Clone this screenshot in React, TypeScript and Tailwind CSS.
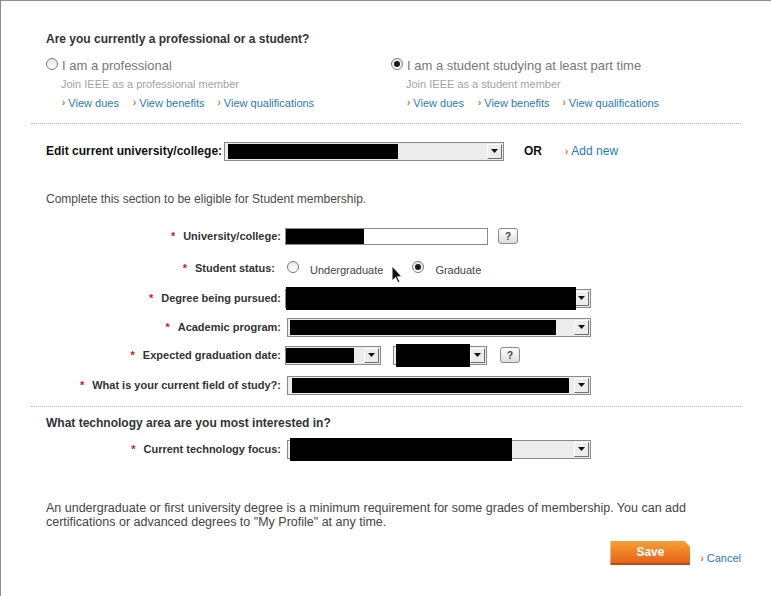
import type { ReactNode } from "react";

function Radio({ checked }: { checked?: boolean }) {
  return (
    <span className="flex w-[12px] h-[12px] rounded-full border border-[#7a7a7a] bg-gradient-to-b from-[#e8e8e8] to-white items-center justify-center shrink-0">
      {checked && <span className="w-[6px] h-[6px] rounded-full bg-[#1a1a1a]" />}
    </span>
  );
}

function Link({ children, className = "" }: { children: ReactNode; className?: string }) {
  return (
    <span className={`inline-flex items-center ${className}`}>
      <span className="text-[#e0701c] text-[10px] font-bold mr-[3px]">›</span>
      <span className="text-[#2a7bb5]">{children}</span>
    </span>
  );
}

function Arrow() {
  return (
    <span className="flex w-[15px] h-[15px] bg-[#ececec] border-t border-l border-t-white border-l-white border-r border-b border-r-[#6e6e6e] border-b-[#6e6e6e] items-center justify-center shrink-0">
      <svg width="7" height="4" viewBox="0 0 7 4">
        <path d="M0 0h7L3.5 4z" fill="#111" />
      </svg>
    </span>
  );
}

function Select({ w, black, blackLeft = 2, tall, className = "" }: { w: number; black: number; blackLeft?: number; tall?: boolean; className?: string }) {
  return (
    <div className={`relative h-[19px] border border-[#8a8a8a] bg-[#ececec] flex items-center justify-end pr-[1px] ${className}`} style={{ width: w }}>
      <Arrow />
      <div
        className={`absolute bg-black ${tall ? "-top-[3px] -bottom-[3px]" : "top-[1px] bottom-[1px]"}`}
        style={{ left: blackLeft, width: black }}
      />
    </div>
  );
}

function Help() {
  return (
    <span className="flex w-[20px] h-[16px] rounded-[3px] border border-[#8a8a8a] bg-gradient-to-b from-white to-[#dedede] items-center justify-center text-[10px] font-bold text-[#444]">
      ?
    </span>
  );
}

function Row({ label, h, pr = 4, children }: { label: string; h: number; pr?: number; children: ReactNode }) {
  return (
    <div className="flex items-center" style={{ height: h }}>
      <div className="w-[238px] text-right text-[11px] font-bold text-[#333] whitespace-nowrap" style={{ paddingRight: pr }}>
        <span className="text-[#d11] mr-[8px]">*</span>
        {label}
      </div>
      {children}
    </div>
  );
}

function MemberOption({ checked, title, sub }: { checked?: boolean; title: string; sub: string }) {
  return (
    <div>
      <div className="flex items-start h-[18px]">
        <span className="mt-[1px]"><Radio checked={checked} /></span>
        <span className="ml-[4px] text-[13px] leading-[18px] text-[#777]">{title}</span>
      </div>
      <div className="pl-[15px] mt-[2px] text-[11px] leading-[14px] text-[#a3a3a3]">{sub}</div>
      <div className="pl-[16px] mt-[5px] flex text-[11px] leading-[14px]">
        <Link className="mr-[14px]">View dues</Link>
        <Link className="mr-[13px]">View benefits</Link>
        <Link>View qualifications</Link>
      </div>
    </div>
  );
}

export default function App() {
  return (
    <div className="relative w-[771px] h-[596px] bg-white border-l border-t border-[#8c8c8c] overflow-hidden font-['Liberation_Sans',Arial,sans-serif]">
      <div className="pl-[30px] pr-[30px]">
        {/* Member type */}
        <div className="pl-[15px] pt-[31px] pb-[13px]">
          <h2 className="text-[12px] leading-[14px] font-bold text-[#333]">Are you currently a professional or a student?</h2>
          <div className="flex mt-[11px]">
            <div className="w-[345px]">
              <MemberOption title="I am a professional" sub="Join IEEE as a professional member" />
            </div>
            <MemberOption checked title="I am a student studying at least part time" sub="Join IEEE as a student member" />
          </div>
        </div>
        <div className="border-t border-dotted border-[#b5b5b5]" />

        {/* Current university */}
        <div className="pl-[15px] mt-[17px] flex items-center h-[20px]">
          <span className="text-[12px] font-bold text-[#111] w-[178px]">Edit current university/college:</span>
          <Select w={280} black={170} blackLeft={3} />
          <span className="text-[12px] font-bold text-[#111] ml-[20px]">OR</span>
          <Link className="text-[12px] ml-[23px]">Add new</Link>
        </div>
        <div className="pl-[15px] mt-[31px] text-[12px] leading-[14px] text-[#4a4a4a]">
          Complete this section to be eligible for Student membership.
        </div>

        {/* Student details */}
        <div className="pl-[16px] mt-[15px]">
          <Row label="University/college:" h={30}>
            <div className="relative w-[203px] h-[17px] border border-[#8a8a8a] bg-white">
              <div className="absolute left-0 top-0 bottom-0 w-[78px] bg-black" />
            </div>
            <span className="ml-[10px]"><Help /></span>
          </Row>
          <Row label="Student status:" h={34} pr={10}>
            <span className="ml-[2px] -mt-[2px]"><Radio /></span>
            <span className="ml-[11px] text-[11px] text-[#444] mt-[4px]">Undergraduate</span>
            <span className="ml-[29px] -mt-[2px]"><Radio checked /></span>
            <span className="ml-[11px] text-[11px] text-[#444] mt-[4px]">Graduate</span>
          </Row>
          <Row label="Degree being pursued:" h={26}>
            <Select w={306} black={290} blackLeft={0} tall />
          </Row>
          <Row label="Academic program:" h={32}>
            <Select w={304} black={266} blackLeft={2} className="ml-[2px]" />
          </Row>
          <Row label="Expected graduation date:" h={24}>
            <Select w={96} black={68} blackLeft={0} />
            <Select w={94} black={74} blackLeft={2} tall className="ml-[12px]" />
            <span className="ml-[13px]"><Help /></span>
          </Row>
          <Row label="What is your current field of study?:" h={36}>
            <Select w={304} black={277} blackLeft={4} className="ml-[2px]" />
          </Row>
        </div>
        <div className="mt-[3px] border-t border-dotted border-[#b5b5b5]" />

        {/* Technology */}
        <div className="pl-[15px] pt-[9px] text-[12px] leading-[14px] font-bold text-[#333]">What technology area are you most interested in?</div>
        <div className="pl-[16px] mt-[4px]">
          <Row label="Current technology focus:" h={30}>
            <Select w={304} black={222} blackLeft={2} tall className="ml-[2px]" />
          </Row>
        </div>

        <p className="pl-[15px] mt-[37px] w-[675px] text-[12.5px] leading-[14px] text-[#444]">
          An undergraduate or first university degree is a minimum requirement for some grades of membership. You can add certifications or advanced degrees to "My Profile" at any time.
        </p>

        <div className="flex justify-end items-start mt-[12px]">
          <button className="w-[80px] h-[24px] bg-gradient-to-b from-[#f6a033] to-[#e5621b] border-b-2 border-[#b94e12] text-white text-[12px] font-bold leading-[20px] [clip-path:polygon(0_0,calc(100%-6px)_0,100%_6px,100%_100%,0_100%)]">
            Save
          </button>
          <Link className="text-[11px] ml-[10px] mt-[9px]">Cancel</Link>
        </div>
      </div>

      {/* mouse cursor */}
      <svg className="absolute left-[390px] top-[264px]" width="12" height="20" viewBox="0 0 12 20">
        <path d="M1 1v15l3.5-3.5 2.5 5.5 2-1-2.5-5.2H11z" fill="#111" stroke="#fff" strokeWidth="1" />
      </svg>
    </div>
  );
}
